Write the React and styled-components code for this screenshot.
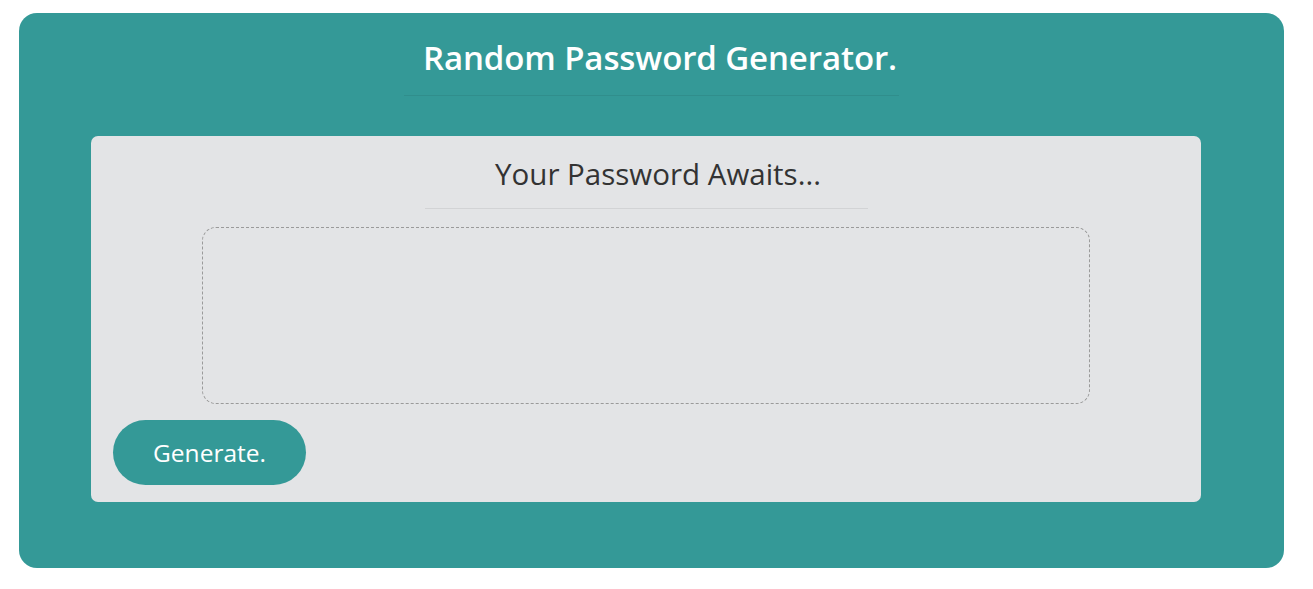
import React from "react";
import styled, { createGlobalStyle } from "styled-components";

const Global = createGlobalStyle`
  html, body { margin: 0; padding: 0; background: #ffffff; }
  body { font-family: "Open Sans", "Noto Sans", sans-serif; }
  * { box-sizing: border-box; }
`;

const Page = styled.div`
  padding: 13px 29px 21px 19px;
`;

const Card = styled.main`
  background: #349997;
  border-radius: 18px;
  height: 555px;
  padding-top: 26px;
  display: flex;
  flex-direction: column;
  align-items: stretch;
`;

const Title = styled.h1`
  margin: 0;
  text-align: center;
  color: #ffffff;
  font-size: 33px;
  font-weight: 600;
  line-height: 38px;
  letter-spacing: -0.1px;
  padding-left: 17px;
`;

const Rule = styled.hr`
  border: 0;
  height: 1px;
  background: ${(p) => p.$color};
  width: ${(p) => p.$width}px;
  margin: ${(p) => p.$mt}px auto 0;
  flex-shrink: 0;
`;

const Panel = styled.section`
  margin: 40px 0 0 72px;
  width: 1110px;
  height: 366px;
  background: #e3e4e6;
  border-radius: 7px;
  padding: 21px 22px 17px;
  display: flex;
  flex-direction: column;
`;

const SubTitle = styled.h2`
  margin: 0;
  text-align: center;
  color: #333333;
  font-size: 29.5px;
  font-weight: 400;
  line-height: 34px;
  padding-left: 24px;
`;

const Output = styled.textarea`
  display: block;
  margin: 18px auto 0;
  width: 888px;
  height: 177px;
  border: 1px dashed #9a9a9a;
  border-radius: 14px;
  background: transparent;
  resize: none;
  outline: none;
  font-family: inherit;
  font-size: 20px;
  padding: 12px;
`;

const Button = styled.button`
  margin-top: 16px;
  align-self: flex-start;
  width: 193px;
  height: 65px;
  border: 0;
  border-radius: 33px;
  background: #349997;
  color: #ffffff;
  font-family: inherit;
  font-size: 24.5px;
  font-weight: 400;
  cursor: pointer;
`;

export default function App() {
  return (
    <>
      <Global />
      <Page>
        <Card>
          <Title>Random Password Generator.</Title>
          <Rule $color="rgba(0,0,0,0.07)" $width={495} $mt={18} />
          <Panel>
            <SubTitle>Your Password Awaits...</SubTitle>
            <Rule $color="#d2d3d5" $width={443} $mt={17} />
            <Output readOnly placeholder="" aria-label="Generated Password" />
            <Button type="button">Generate.</Button>
          </Panel>
        </Card>
      </Page>
    </>
  );
}
